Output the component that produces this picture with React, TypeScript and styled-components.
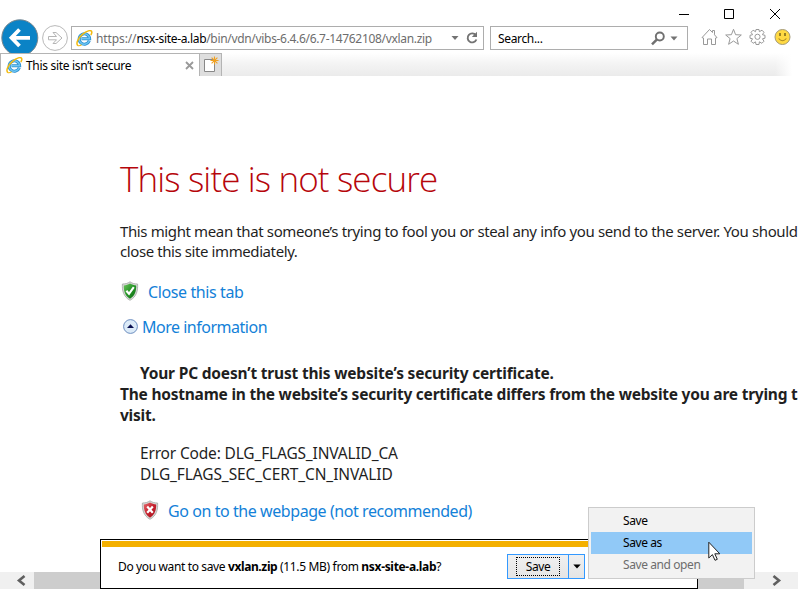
import React from "react";
import styled, { createGlobalStyle } from "styled-components";

const Global = createGlobalStyle`
  * { box-sizing: border-box; }
  html, body { margin: 0; padding: 0; background: #fff; overflow: hidden; }
  body { font-family: "Noto Sans", "Open Sans", sans-serif; color: #1f1f1f; }
  svg { display: block; flex: none; }
`;

const Window = styled.div`
  position: relative;
  display: flex;
  flex-direction: column;
  width: 798px;
  height: 589px;
  overflow: hidden;
  background: #fff;
`;

const Run = styled.span<{ $track?: number }>`
  white-space: pre;
  letter-spacing: ${(p) => p.$track ?? 0}px;
`;

const TitleBar = styled.div`
  display: flex;
  flex: none;
  justify-content: flex-end;
  gap: 34px;
  height: 19px;
  padding: 8px 17px 0 0;
`;

const NavRow = styled.div`
  display: flex;
  flex: none;
  height: 34px;
  padding-left: 1px;
  overflow: hidden;
`;

const Field = styled.div<{ $width: number }>`
  display: flex;
  align-items: center;
  width: ${(p) => p.$width}px;
  height: 24px;
  margin: 7px 6px 0 0;
  border: 1px solid #adadad;
  font-size: 12px;
  line-height: 20px;
`;

const Host = styled.span`
  color: #000;
`;

const FieldText = styled.div<{ $dark?: boolean; $left: number }>`
  flex: 1;
  min-width: 0;
  padding: 1px 0 0 ${(p) => p.$left}px;
  white-space: nowrap;
  color: ${(p) => (p.$dark ? "#000" : "#6d6d6d")};
`;

const Tools = styled.div`
  display: flex;
  gap: 7.4px;
  padding: 9px 0 0 6.5px;
`;

const TabRow = styled.div`
  display: flex;
  flex: none;
  height: 23px;
`;

const Tab = styled.div`
  display: flex;
  align-items: center;
  width: 200px;
  padding: 0 5px;
  border: 1px solid #b4b4b4;
  border-bottom: 0;
  font-size: 12px;
  line-height: 20px;
  color: #000;
  background: #fff;
`;

const TabTitle = styled.div`
  flex: 1;
  padding: 1px 0 0 3px;
`;

const NewTab = styled.div`
  width: 22px;
  border: 1px solid #b4b4b4;
  border-left: 0;
  border-bottom: 0;
  background: #dedede;
`;

const TabStrip = styled.div`
  flex: 1;
  margin-right: 6px;
  background: linear-gradient(to right, transparent 97%, #fff), linear-gradient(#fff, #f4f4f4 45%, #ebebeb);
`;

const Page = styled.main`
  flex: 1;
  min-height: 0;
  padding: 79px 0 0 120px;
`;

const Heading = styled.h1`
  margin: 0;
  font-family: "Open Sans", sans-serif;
  font-size: 35px;
  font-weight: 300;
  line-height: 47px;
  color: #b6060b;
`;

const Lead = styled.p`
  margin: 19px 0 0;
  font-size: 15px;
  line-height: 20px;
`;

const Line = styled.span<{ $indent?: boolean }>`
  display: block;
  padding-left: ${(p) => (p.$indent ? 20 : 0)}px;
  white-space: nowrap;
`;

const Action = styled.a<{ $top: number; $gap: number; $left?: number }>`
  display: flex;
  align-items: center;
  gap: ${(p) => p.$gap}px;
  height: 22px;
  margin: ${(p) => p.$top}px 0 0 ${(p) => p.$left ?? 0}px;
  font-size: 16px;
  line-height: 22px;
  color: #1381d8;
`;

const Reason = styled.div<{ $bold?: boolean; $top: number }>`
  margin-top: ${(p) => p.$top}px;
  font-size: 15.5px;
  font-weight: ${(p) => (p.$bold ? 700 : 400)};
  line-height: 21px;
`;

const ScrollBar = styled.div`
  display: flex;
  flex: none;
  height: 17px;
  background: #f0f0f0;
`;

const ScrollEnd = styled.div<{ $width: number; $left: number }>`
  width: ${(p) => p.$width}px;
  padding: 3px 0 0 ${(p) => p.$left}px;
`;

const Thumb = styled.div`
  width: 710px;
  background: #cdcdcd;
`;

const Notification = styled.div`
  position: absolute;
  left: 100px;
  top: 539px;
  width: 598px;
  height: 50px;
  border: 1px solid #000;
  padding: 1px;
  background: #fff;
`;

const Stripe = styled.div`
  height: 6px;
  background: #f4b000;
`;

const Prompt = styled.div`
  display: flex;
  align-items: center;
  height: 40px;
  padding-left: 16px;
  font-size: 12px;
  line-height: 20px;
  color: #000;
`;

const Question = styled.div`
  width: 389px;
  white-space: nowrap;
  b { font-weight: 700; }
`;

const SplitButton = styled.div`
  display: flex;
  width: 78px;
  height: 25px;
  margin-top: -1px;
  border: 1px solid #3399ff;
  background: linear-gradient(#f0f0f0, #e5e5e5);
`;

const SaveFace = styled.div`
  display: flex;
  align-items: center;
  justify-content: center;
  width: 44px;
  margin: 2px 8px;
  border: 1px dotted #000;
`;

const Arrow = styled.div`
  display: flex;
  flex: 1;
  align-items: center;
  justify-content: center;
  border-left: 1px solid #3399ff;
`;

const Menu = styled.div`
  position: absolute;
  left: 588px;
  top: 507px;
  width: 167px;
  height: 72px;
  padding: 2px;
  border: 1px solid #ccc;
  background: #f2f2f2;
`;

const MenuItem = styled.div<{ $active?: boolean; $disabled?: boolean }>`
  height: 22px;
  padding-left: 32px;
  font-size: 12px;
  line-height: 22px;
  color: ${(p) => (p.$disabled ? "#6d6d6d" : "#000")};
  background: ${(p) => (p.$active ? "#91c9f7" : "transparent")};
`;

const Pointer = styled.svg`
  position: absolute;
  left: 708px;
  top: 541px;
`;

const IeLogo = () => (
  <svg width="17" height="17" viewBox="0 0 17 17">
    <path d="M13.3 10.8 A5.2 5.2 0 1 1 13.6 8.8 H5.5" fill="none" stroke="#2b8ed0" strokeWidth="3.1" />
    <path d="M13.3 10.8 A5.2 5.2 0 1 1 13.6 8.8 H5.5" fill="none" stroke="#6cc5f2" strokeWidth="1.5" />
    <path d="M2.1 15.6 C-.6 14 2 8 6.5 4.3 C10.5 .9 15.3 -.6 15.8 1.8 C16 2.8 15.4 4.1 14.8 5" fill="none" stroke="#f2b90f" strokeWidth="1.5" />
    <path d="M2.1 15.6 C3.2 16.1 4.6 15.4 5.6 14.8" fill="none" stroke="#f2b90f" strokeWidth="1.2" />
  </svg>
);

const Shield = ({ bad }: { bad?: boolean }) => (
  <svg width="18" height="22" viewBox="0 0 18 22">
    <defs>
      <linearGradient id={bad ? "red" : "green"} x1="0" y1="0" x2="1" y2="1">
        <stop offset="0" stopColor={bad ? "#e4686d" : "#6cc35c"} />
        <stop offset=".5" stopColor={bad ? "#c5212d" : "#259426"} />
        <stop offset="1" stopColor={bad ? "#a51420" : "#0f6b15"} />
      </linearGradient>
    </defs>
    <path d="M9 .8 C11.4 2.5 13.8 3 16.6 3 C17 9.5 15.6 15.8 9 19.3 C2.4 15.8 1 9.5 1.4 3 C4.2 3 6.6 2.5 9 .8Z" fill="#d6d8d6" stroke="#a4a7a4" strokeWidth=".8" />
    <path d="M9 2.6 C11 3.8 13 4.3 15.2 4.4 C15.4 9.6 14 14.8 9 17.7 C4 14.8 2.6 9.6 2.8 4.4 C5 4.3 7 3.8 9 2.6Z" fill={`url(#${bad ? "red" : "green"})`} />
    {bad ? (
      <path d="M6.2 6.6 L11.8 12.8 M11.8 6.6 L6.2 12.8" stroke="#fff" strokeWidth="2.2" />
    ) : (
      <path d="M5.4 9.8 L8 12.8 L12.8 6.2" fill="none" stroke="#fff" strokeWidth="2.1" />
    )}
  </svg>
);

export default function App() {
  return (
    <Window>
      <Global />
      <TitleBar>
        <svg width="12" height="12"><path d="M2 6.5 H12" stroke="#000" /></svg>
        <svg width="12" height="12"><path d="M1.5 1.5 H10.5 V10.5 H1.5Z" fill="none" stroke="#000" /></svg>
        <svg width="12" height="12"><path d="M1 1 L11 11 M11 1 L1 11" stroke="#000" /></svg>
      </TitleBar>
      <NavRow>
        <svg width="70" height="38" viewBox="1 19 70 38">
          <circle cx="19.8" cy="37.8" r="18" fill="#0b83c6" stroke="#76858e" />
          <path d="M11 37.8 H30 M19.5 29.5 L11.5 37.8 L19.5 46" fill="none" stroke="#fff" strokeWidth="3.8" />
          <circle cx="55" cy="38" r="12.4" fill="#fff" stroke="#b9b9b9" />
          <path d="M48.5 36.5 H56.5 L53 32.5 H56 L62 38 L56 43.5 H53 L56.5 39.8 H48.5Z" fill="none" stroke="#b5b5b5" />
        </svg>
        <Field $width={413}>
          <svg width="22" height="17" viewBox="-4 0 22 17"><IeLogo /></svg>
          <FieldText $left={2}>
            <Run $track={-0.11}>https://</Run>
            <Host><Run $track={-0.33}>nsx-site-a.lab</Run></Host>
            <Run $track={-0.32}>/bin/vdn/vibs-6.4.6/6.7-14762108/vxlan.zip</Run>
          </FieldText>
          <svg width="35" height="16" viewBox="0 0 35 16">
            <path d="M3.5 6 H10.5 L7 10Z" fill="#737373" />
            <path d="M27.8 5.2 A4.5 4.5 0 1 0 28.4 9.5" fill="none" stroke="#737373" strokeWidth="1.9" />
            <path d="M29 1.8 V7 H23.8Z" fill="#737373" />
          </svg>
        </Field>
        <Field $width={198}>
          <FieldText $left={7} $dark><Run $track={-0.34}>Search...</Run></FieldText>
          <svg width="36" height="16" viewBox="0 0 36 16">
            <circle cx="8.8" cy="6.5" r="4" fill="none" stroke="#707070" strokeWidth="1.9" />
            <path d="M6 9.3 L1 14.3" stroke="#707070" strokeWidth="2.4" />
            <path d="M19.5 6.5 H26.5 L23 10.5Z" fill="#737373" />
          </svg>
        </Field>
        <Tools>
          <svg width="17" height="18" viewBox="0 0 17 18"><path d="M1 9.6 L8.5 1.5 L11.5 4.5 V2.5 H13.5 V6.8 L16 9.6 L14.5 10 V16.5 H10.5 V11 H6.5 V16.5 H2.5 V10Z" fill="#fff" stroke="#999" /></svg>
          <svg width="17" height="18" viewBox="0 0 17 18"><path d="M8.5 1.3 L10.6 6.7 L16.3 7 L11.9 10.6 L13.4 16.3 L8.5 13 L3.6 16.3 L5.1 10.6 L.7 7 L6.4 6.7Z" fill="#fff" stroke="#999" /></svg>
          <svg width="17" height="18" viewBox="0 0 17 18">
            <path d="M7 1.5 H10 L10.4 3.7 L13 2.2 L15 4.3 L13.4 6.7 L16 7.3 V10.2 L13.4 10.8 L15 13.2 L12.9 15.3 L10.4 13.8 L10 16.5 H7 L6.5 13.8 L4.1 15.3 L2 13.2 L3.6 10.8 L1 10.2 V7.3 L3.6 6.7 L2 4.3 L4.1 2.2 L6.5 3.7Z" fill="#fff" stroke="#999" />
            <circle cx="8.5" cy="8.8" r="2.6" fill="#fff" stroke="#999" />
          </svg>
          <svg width="17" height="18" viewBox="0 0 17 18">
            <circle cx="8.5" cy="9" r="7.5" fill="#ffd943" stroke="#a39a78" />
            <path d="M6 5 V8 M11 5 V8" stroke="#806b20" strokeWidth="1.6" />
            <path d="M4.6 10.5 Q8.5 15 12.4 10.5" fill="none" stroke="#a88722" strokeWidth="1.1" />
          </svg>
        </Tools>
      </NavRow>
      <TabRow>
        <Tab>
          <IeLogo />
          <TabTitle><Run $track={-0.31}>This site isn’t secure</Run></TabTitle>
          <svg width="9" height="9"><path d="M1 1 L8 8 M8 1 L1 8" stroke="#999" strokeWidth="1.8" /></svg>
        </Tab>
        <NewTab>
          <svg width="20" height="22" viewBox="200 54 20 22">
            <path d="M204.5 59.5 H214.5 V71.5 H204.5Z" fill="#fff" stroke="#888" />
            <path d="M214.5 56.5 V64.5 M210.5 60.5 H218.5 M211.6 57.6 L217.4 63.4 M217.4 57.6 L211.6 63.4" stroke="#f0a020" strokeWidth="1.1" />
          </svg>
        </NewTab>
        <TabStrip />
      </TabRow>
      <Page>
        <Heading><Run $track={-0.88}>This site is not secure</Run></Heading>
        <Lead>
          <Line><Run $track={-0.378}>This might mean that someone’s trying to fool you or steal any info you send to the server. You should</Run></Line>
          <Line><Run $track={-0.41}>close this site immediately.</Run></Line>
        </Lead>
        <Action $top={20} $gap={9} $left={1}><Shield /><Run $track={-0.39}>Close this tab</Run></Action>
        <Action $top={13} $gap={4} $left={3}>
          <svg width="15" height="17" viewBox="0 0 15 17">
            <circle cx="7.5" cy="7.5" r="6.9" fill="#dcebf8" stroke="#6e8fc0" />
            <path d="M4 9 L7.5 5.3 L11 9Z" fill="#0a1050" />
          </svg>
          <Run $track={-0.49}>More information</Run>
        </Action>
        <Reason $bold $top={25}>
          <Line $indent><Run $track={-0.19}>Your PC doesn’t trust this website’s security certificate.</Run></Line>
          <Line><Run $track={-0.227}>The hostname in the website’s security certificate differs from the website you are trying t</Run></Line>
          <Line><Run $track={-0.25}>visit.</Run></Line>
        </Reason>
        <Reason $top={17}>
          <Line $indent><Run $track={-0.17}>Error Code: DLG_FLAGS_INVALID_CA</Run></Line>
          <Line $indent><Run $track={-0.11}>DLG_FLAGS_SEC_CERT_CN_INVALID</Run></Line>
        </Reason>
        <Action $top={15} $gap={9} $left={21}><Shield bad /><Run $track={-0.43}>Go on to the webpage (not recommended)</Run></Action>
      </Page>
      <ScrollBar>
        <ScrollEnd $width={34} $left={16}><svg width="10" height="11"><path d="M8.5 1 L3 5.5 L8.5 10" fill="none" stroke="#5f5f5f" strokeWidth="2.6" /></svg></ScrollEnd>
        <Thumb />
        <ScrollEnd $width={54} $left={28}><svg width="10" height="11"><path d="M1.5 1 L7 5.5 L1.5 10" fill="none" stroke="#5f5f5f" strokeWidth="2.6" /></svg></ScrollEnd>
      </ScrollBar>
      <Notification>
        <Stripe />
        <Prompt>
          <Question>
            <Run $track={-0.365}>Do you want to save </Run>
            <b><Run $track={-0.39}>vxlan.zip</Run></b>
            <Run $track={-0.34}> (11.5 MB) from </Run>
            <b><Run $track={-0.32}>nsx-site-a.lab</Run></b>
            <Run>?</Run>
          </Question>
          <SplitButton>
            <SaveFace><Run $track={-0.4}>Save</Run></SaveFace>
            <Arrow><svg width="8" height="5" viewBox="0 0 8 5"><path d="M.3 .5 H7.7 L4 4.5Z" fill="#000" /></svg></Arrow>
          </SplitButton>
        </Prompt>
      </Notification>
      <Menu>
        <MenuItem><Run $track={-0.4}>Save</Run></MenuItem>
        <MenuItem $active><Run $track={-0.42}>Save as</Run></MenuItem>
        <MenuItem $disabled><Run $track={-0.41}>Save and open</Run></MenuItem>
      </Menu>
      <Pointer width="13" height="21" viewBox="0 0 13 21">
        <path d="M.8 1.2 V17 L4.4 13.6 L7 19.3 L9.3 18.3 L6.8 12.8 H11.8Z" fill="#fff" stroke="#222" />
      </Pointer>
    </Window>
  );
}
